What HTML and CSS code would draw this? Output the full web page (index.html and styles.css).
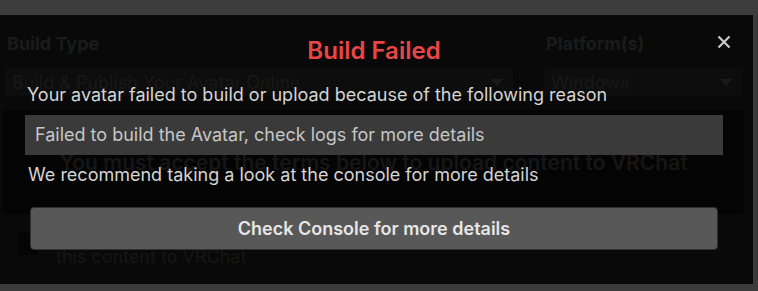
FILE: index.html
```html
<!DOCTYPE html>
<html>
<head>
<meta charset="utf-8">
<link rel="stylesheet" href="styles.css">
</head>
<body>
<div class="frame">
  <div class="topbar"></div>
  <div class="middle">
    <div class="main">
      <div class="backdrop">
        <div class="fields">
          <div class="field field-build">
            <div class="label">Build Type</div>
            <div class="dropdown"><span>Build &amp; Publish Your Avatar Online</span><span class="caret"></span></div>
          </div>
          <div class="field field-platform">
            <div class="label">Platform(s)</div>
            <div class="dropdown"><span>Windows</span><span class="caret"></span></div>
          </div>
        </div>
        <div class="terms">You must accept the terms below to upload content to VRChat</div>
        <div class="agree">
          <span class="checkbox"></span>
          <span class="agree-text">this content to VRChat</span>
        </div>
      </div>
      <div class="modal">
        <div class="modal-head">
          <h1 class="title">Build Failed</h1>
          <button class="close" aria-label="Close">
            <svg width="14" height="14" viewBox="0 0 14 14"><path d="M1.5 1.5 L12.5 12.5 M12.5 1.5 L1.5 12.5" stroke="#c9c9c9" stroke-width="2.2" stroke-linecap="butt"/></svg>
          </button>
        </div>
        <p class="msg msg-1">Your avatar failed to build or upload because of the following reason</p>
        <div class="reason">Failed to build the Avatar, check logs for more details</div>
        <p class="msg msg-2">We recommend taking a look at the console for more details</p>
        <button class="console-btn">Check Console for more details</button>
      </div>
    </div>
    <div class="rightbar"></div>
  </div>
  <div class="bottombar"></div>
</div>
</body>
</html>
```

FILE: styles.css
```css
* { box-sizing: border-box; }
html, body { margin: 0; padding: 0; background: #3c3c3c; }
body { font-family: Inter, "Noto Sans", sans-serif; }

.frame {
  width: 758px;
  height: 291px;
  display: grid;
  grid-template-rows: 15px 269px 7px;
  background: #3c3c3c;
}
.topbar { background: #3d3d3d; }
.bottombar { background: #3b3b3b; }
.middle {
  display: grid;
  grid-template-columns: 753px 5px;
}
.rightbar { background: #3a3a3a; }

.main {
  position: relative;
  background: #090909;
  overflow: hidden;
}

/* faded content behind the dialog */
.backdrop {
  padding: 18px 9px 0 3px;
  color: #1b1b1b;
}
.fields {
  display: flex;
  gap: 31px;
  padding-left: 2px;
}
.field-build { width: 508px; }
.field-platform { width: 198px; }
.label {
  font-weight: 700;
  font-size: 18px;
  line-height: 22px;
  padding-left: 2px;
}
.dropdown {
  margin-top: 13px;
  height: 28px;
  background: #0d0d0d;
  border-radius: 3px;
  display: flex;
  align-items: center;
  justify-content: space-between;
  padding: 0 10px 0 7px;
  font-size: 18px;
  color: #181818;
}
.caret {
  width: 0; height: 0;
  border-left: 6px solid transparent;
  border-right: 6px solid transparent;
  border-top: 7px solid #1a1a1a;
}
.terms {
  margin-top: 14px;
  height: 104px;
  background: #040404;
  border-radius: 4px;
  text-align: center;
  font-size: 21px;
  line-height: 26px;
  font-weight: 600;
  padding-top: 40px;
  color: #161616;
}
.agree {
  display: flex;
  align-items: flex-start;
  margin-top: 19px;
  padding-left: 15px;
}
.checkbox {
  width: 20px;
  height: 22px;
  background: #040404;
  border-radius: 2px;
}
.agree-text {
  margin-left: 18px;
  margin-top: 13px;
  font-size: 18px;
  line-height: 22px;
  color: #161616;
}

/* dialog */
.modal {
  position: absolute;
  inset: 0;
  display: flex;
  flex-direction: column;
  padding: 0 30px 0 25px;
}
.modal-head {
  position: relative;
  height: 64px;
  display: flex;
  justify-content: center;
  align-items: flex-start;
}
.title {
  margin: 22px 0 0 0;
  font-size: 24px;
  line-height: 28px;
  font-weight: 600;
  color: #e94646;
}
.close {
  position: absolute;
  right: -8px;
  top: 20px;
  width: 14px;
  height: 14px;
  padding: 0;
  border: 0;
  background: none;
}
.close svg { display: block; }
.msg {
  margin: 0;
  font-size: 18px;
  line-height: 22px;
  color: #d4d4d4;
  white-space: nowrap;
}
.msg-1 { margin-top: 5px; padding-left: 2px; }
.reason {
  margin-top: 9px;
  height: 40px;
  width: 698px;
  background: #3a3a3a;
  color: #c6c6c6;
  font-size: 18px;
  line-height: 40px;
  padding-left: 10px;
  white-space: nowrap;
}
.msg-2 { margin-top: 9px; padding-left: 3px; }
.console-btn {
  margin: 21px 0 0 5px;
  width: 688px;
  height: 43px;
  background: #585858;
  border: 1px solid #303030;
  border-radius: 4px;
  color: #e6e6e6;
  font-family: Inter, "Noto Sans", sans-serif;
  font-size: 18px;
  font-weight: 600;
  padding: 0;
}
```
